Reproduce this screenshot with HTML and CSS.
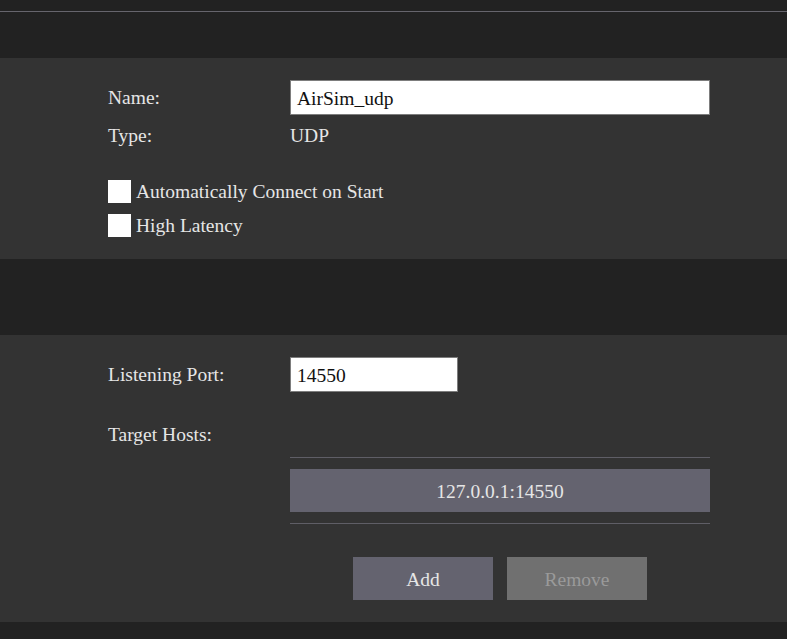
FILE: index.html
```html
<!DOCTYPE html>
<html>
<head>
<meta charset="utf-8">
<link rel="stylesheet" href="styles.css">
</head>
<body>
<div class="topline"></div>
<div class="panel panel-general">
  <div class="row row-input">
    <div class="label">Name:</div>
    <div class="field name-field">AirSim_udp</div>
  </div>
  <div class="row row-text">
    <div class="label">Type:</div>
    <div class="value">UDP</div>
  </div>
  <div class="check-row first">
    <span class="box"></span><span class="check-label">Automatically Connect on Start</span>
  </div>
  <div class="check-row">
    <span class="box"></span><span class="check-label">High Latency</span>
  </div>
</div>
<div class="panel panel-udp">
  <div class="row row-input">
    <div class="label">Listening Port:</div>
    <div class="field port-field">14550</div>
  </div>
  <div class="row row-text hosts-label">
    <div class="label">Target Hosts:</div>
  </div>
  <div class="hosts">
    <div class="sep"></div>
    <div class="host">127.0.0.1:14550</div>
    <div class="sep"></div>
    <div class="buttons">
      <div class="btn btn-add">Add</div>
      <div class="btn btn-remove">Remove</div>
    </div>
  </div>
</div>
</body>
</html>
```
FILE: styles.css
```css
html, body {
  margin: 0;
  padding: 0;
  background: #222222;
  font-family: "Liberation Serif", "Times New Roman", serif;
  font-size: 19.5px;
  color: #e6e6e6;
}
.topline {
  margin-top: 11px;
  height: 1px;
  background: #66656d;
}
.panel {
  background: #333333;
  padding: 22px 0 22px 108px;
}
.panel-general {
  margin-top: 46px;
}
.panel-udp {
  margin-top: 76px;
}
.row {
  display: flex;
  align-items: center;
}
.row-input {
  height: 35px;
}
.row-text {
  margin-top: 9px;
  height: 24px;
  line-height: 26px;
}
.label {
  width: 182px;
  flex: none;
}
.field {
  box-sizing: border-box;
  height: 35px;
  background: #ffffff;
  border: 1px solid #7d7d7d;
  color: #111111;
  padding-left: 6px;
  line-height: 35px;
}
.name-field { width: 420px; }
.port-field { width: 168px; }
.check-row {
  display: flex;
  align-items: center;
  height: 23px;
  margin-top: 11px;
}
.check-row.first { margin-top: 32px; }
.box {
  width: 23px;
  height: 23px;
  background: #ffffff;
  flex: none;
}
.check-label {
  margin-left: 5px;
  line-height: 25px;
}
.hosts-label {
  margin-top: 31px;
}
.hosts {
  margin-left: 182px;
  width: 420px;
  margin-top: 10px;
}
.sep {
  height: 1px;
  background: #5f5e66;
}
.host {
  margin: 11px 0;
  height: 43px;
  line-height: 45px;
  background: #64636f;
  text-align: center;
  color: #e6e6e6;
}
.buttons {
  display: flex;
  justify-content: center;
  gap: 14px;
  margin-top: 33px;
}
.btn {
  width: 140px;
  height: 43px;
  line-height: 45px;
  text-align: center;
}
.btn-add {
  background: #64636f;
  color: #e6e6e6;
}
.btn-remove {
  background: #707070;
  color: #9a9a9a;
}
```
